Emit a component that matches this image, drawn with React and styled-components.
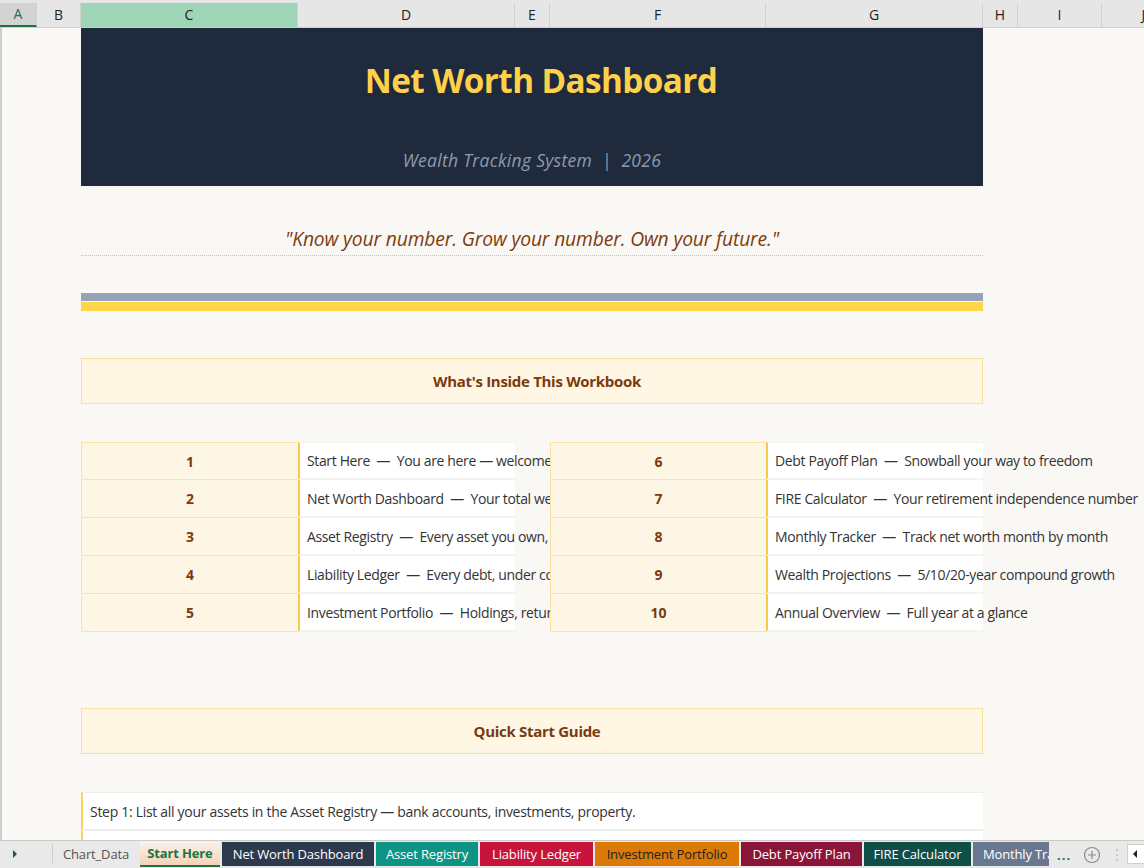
import React from "react";
import styled, { createGlobalStyle } from "styled-components";

const Global = createGlobalStyle`
  html, body { margin: 0; padding: 0; background: #faf8f4; }
  body { width: 1144px; height: 868px; overflow: hidden; font-family: "Open Sans", "Lato", sans-serif; }
  * { box-sizing: border-box; }
`;

const Frame = styled.div`
  width: 1144px;
  height: 868px;
  display: flex;
  flex-direction: column;
  overflow: hidden;
`;

const ColBar = styled.div`
  display: flex;
  height: 28px;
  background: #e6e6e6;
  border-bottom: 1px solid #cfcfcf;
  flex-shrink: 0;
  overflow: hidden;
`;

const ColCell = styled.div`
  width: ${(p) => p.w}px;
  flex-shrink: 0;
  display: flex;
  align-items: center;
  justify-content: center;
  font-family: "Open Sans", sans-serif;
  font-size: 14px;
  color: ${(p) => (p.active ? "#217346" : "#222")};
  background: ${(p) => (p.active ? "#d3d3d3" : p.sel ? "#9fd5b7" : "transparent")};
  border-right: 1px solid #d2d2d2;
  border-bottom: ${(p) => (p.active ? "2px solid #217346" : "0")};
  margin-top: 3px;
  padding-bottom: 2px;
`;

const Sheet = styled.div`
  flex: 1;
  overflow: hidden;
  background: #faf8f4;
  border-left: 2px solid #cfcfcf;
  padding-left: 79px;
  display: flex;
  flex-direction: column;
`;

const Inner = styled.div`
  width: 902px;
  display: flex;
  flex-direction: column;
`;

const Banner = styled.div`
  height: 158px;
  background: #1f2a3c;
  display: flex;
  flex-direction: column;
  align-items: center;
`;

const Title = styled.div`
  margin-top: 31px;
  padding-left: 18px;
  font-family: "Open Sans", sans-serif;
  font-weight: 700;
  font-size: 33.3px;
  letter-spacing: -0.6px;
  color: #ffd04a;
  line-height: 42px;
`;

const Subtitle = styled.div`
  margin-top: 47px;
  font-family: "Open Sans", sans-serif;
  font-style: italic;
  font-size: 17.5px;
  color: #8e9ab0;
  white-space: pre;
  line-height: 24px;
  letter-spacing: 0.3px;
`;

const Quote = styled.div`
  height: 70px;
  display: flex;
  align-items: flex-end;
  justify-content: center;
  padding-bottom: 3px;
  border-bottom: 1px dotted #f5c73a;
  font-family: "Open Sans", sans-serif;
  font-style: italic;
  font-size: 19.3px;
  color: #7f3b10;
  letter-spacing: -0.15px;
`;

const Stripe = styled.div`
  height: ${(p) => p.h}px;
  background: ${(p) => p.c};
  margin-top: ${(p) => p.mt || 0}px;
`;

const SectionBox = styled.div`
  margin-top: ${(p) => p.mt}px;
  height: 46px;
  background: #fff6e3;
  border: 1px solid #f9e09a;
  display: flex;
  align-items: center;
  justify-content: center;
  padding-left: 10px;
  font-family: "Open Sans", sans-serif;
  font-weight: 700;
  font-size: 15px;
  letter-spacing: -0.3px;
  color: #7a3a10;
`;

const Contents = styled.div`
  margin-top: 38px;
  display: grid;
  grid-template-columns: 217px 217px 35px 216px 217px;
  grid-auto-rows: 38px;
`;

const NumCell = styled.div`
  background: #fef6e4;
  border: 1px solid #fbe3a0;
  border-top-width: ${(p) => (p.first ? 1 : 0)}px;
  border-right: 0;
  display: flex;
  align-items: center;
  justify-content: center;
  font-family: "Open Sans", sans-serif;
  font-weight: 700;
  font-size: 14px;
  color: #7a3a10;
  position: relative;
  z-index: 1;
`;

const DescCell = styled.div`
  background: #ffffff;
  border-left: 2px solid #f8c94a;
  border-bottom: 2px solid #f3f3f3;
  border-top: ${(p) => (p.first ? "1px solid #f3f3f3" : "0")};
  display: flex;
  align-items: center;
  padding-left: 7px;
  white-space: pre;
  overflow: visible;
  font-family: "Open Sans", sans-serif;
  font-size: 14px;
  letter-spacing: -0.36px;
  color: #333;
  position: relative;
  z-index: 0;
`;

const Gap = styled.div``;

const StepRow = styled.div`
  margin-top: ${(p) => p.mt || 0}px;
  height: 38px;
  flex-shrink: 0;
  background: #fff;
  border-left: 2px solid #f8d35a;
  border-top: 1px solid #eeeeee;
  border-bottom: 1px solid #eeeeee;
  display: flex;
  align-items: center;
  padding-left: 7px;
  font-family: "Open Sans", sans-serif;
  font-size: 14px;
  letter-spacing: -0.3px;
  color: #333;
  white-space: nowrap;
`;

const TabBar = styled.div`
  height: 28px;
  flex-shrink: 0;
  background: #e9e9e9;
  border-top: 1px solid #cacaca;
  display: flex;
  align-items: stretch;
  font-family: "Open Sans", sans-serif;
  font-size: 13px;
  letter-spacing: -0.15px;
  overflow: hidden;
`;

const Nav = styled.div`
  width: 53px;
  flex-shrink: 0;
  display: flex;
  align-items: center;
  padding-left: 12px;
  border-right: 1px solid #cdcdcd;
  margin: 3px 0 5px;
`;

const Tab = styled.div`
  display: flex;
  align-items: center;
  justify-content: center;
  margin: 1px 1px 2px 1px;
  background: ${(p) => p.bg};
  color: ${(p) => p.fg};
  font-weight: ${(p) => (p.active ? 700 : 400)};
  white-space: nowrap;
  overflow: hidden;
  flex-shrink: 0;
  width: ${(p) => p.w}px;
  ${(p) => p.clip && `justify-content: flex-start; padding-left: 10px;`}
  ${(p) =>
    p.active &&
    `background: linear-gradient(#fbf3ec, #f3d3b6);
     border-bottom: 2px solid #217346;
     margin: 0 1px 1px 1px;`}
`;

const TabDots = styled.div`
  display: flex;
  align-items: center;
  flex-shrink: 0;
  margin-left: 7px;
  color: #217346;
  font-weight: 700;
  letter-spacing: 1px;
`;

const IconSlot = styled.div`
  display: flex;
  align-items: center;
  flex-shrink: 0;
  margin-left: ${(p) => p.ml}px;
`;

const ScrollBox = styled.div`
  margin-left: 8px;
  width: 20px;
  flex-shrink: 0;
  background: #fff;
  border: 1px solid #cfcfcf;
  margin-top: 3px;
  margin-bottom: 4px;
  display: flex;
  align-items: center;
  padding-left: 4px;
`;

const left = [
  ["1", "Start Here", "You are here — welcome"],
  ["2", "Net Worth Dashboard", "Your total wealth at a glance"],
  ["3", "Asset Registry", "Every asset you own, valued"],
  ["4", "Liability Ledger", "Every debt, under control"],
  ["5", "Investment Portfolio", "Holdings, returns and allocation"],
];
const right = [
  ["6", "Debt Payoff Plan", "Snowball your way to freedom"],
  ["7", "FIRE Calculator", "Your retirement independence number"],
  ["8", "Monthly Tracker", "Track net worth month by month"],
  ["9", "Wealth Projections", "5/10/20-year compound growth"],
  ["10", "Annual Overview", "Full year at a glance"],
];

const cols = [
  ["A", 37], ["B", 44], ["C", 217], ["D", 217], ["E", 35], ["F", 216],
  ["G", 217], ["H", 35], ["I", 84], ["J", 84],
];

const tabs = [
  { t: "Net Worth Dashboard", bg: "#2d3a4e", fg: "#fff", w: 152 },
  { t: "Asset Registry", bg: "#0e9484", fg: "#fff", w: 102 },
  { t: "Liability Ledger", bg: "#c8143c", fg: "#fff", w: 113 },
  { t: "Investment Portfolio", bg: "#dc7a08", fg: "#222", w: 144 },
  { t: "Debt Payoff Plan", bg: "#8a1538", fg: "#fff", w: 121 },
  { t: "FIRE Calculator", bg: "#0f4f47", fg: "#fff", w: 107 },
  { t: "Monthly Tracker", bg: "#6a7791", fg: "#fff", w: 76, clip: true },
];

export default function App() {
  return (
    <Frame>
      <Global />
      <ColBar>
        {cols.map(([l, w]) => (
          <ColCell key={l} w={w} active={l === "A"} sel={l === "C"}>
            {l}
          </ColCell>
        ))}
      </ColBar>
      <Sheet>
        <Inner>
          <Banner>
            <Title>Net Worth Dashboard</Title>
            <Subtitle>Wealth Tracking System  |  2026</Subtitle>
          </Banner>
          <Quote>"Know your number. Grow your number. Own your future."</Quote>
          <Stripe h={8} c="#96a3b8" mt={37} />
          <Stripe h={9} c="#ffd54a" mt={1} />
          <SectionBox mt={47}>What's Inside This Workbook</SectionBox>
          <Contents>
            {left.map((l, i) => {
              const r = right[i];
              return (
                <React.Fragment key={l[0]}>
                  <NumCell first={i === 0}>{l[0]}</NumCell>
                  <DescCell first={i === 0}>{`${l[1]}  —  ${l[2]}`}</DescCell>
                  <Gap />
                  <NumCell first={i === 0}>{r[0]}</NumCell>
                  <DescCell first={i === 0}>{`${r[1]}  —  ${r[2]}`}</DescCell>
                </React.Fragment>
              );
            })}
          </Contents>
          <SectionBox mt={76}>Quick Start Guide</SectionBox>
          <StepRow mt={38}>
            Step 1: List all your assets in the Asset Registry — bank accounts, investments, property.
          </StepRow>
          <StepRow />
        </Inner>
      </Sheet>
      <TabBar>
        <Nav>
          <svg width="6" height="8" viewBox="0 0 6 8">
            <path d="M1 0 L5 4 L1 8 Z" fill="#1e5c3a" />
          </svg>
        </Nav>
        <Tab bg="transparent" fg="#555" w={84}>Chart_Data</Tab>
        <Tab active bg="#fff" fg="#217346" w={80}>Start Here</Tab>
        {tabs.map((t) => (
          <Tab key={t.t} bg={t.bg} fg={t.fg} w={t.w} clip={t.clip}>
            {t.t}
          </Tab>
        ))}
        <TabDots>...</TabDots>
        <IconSlot ml={12}>
          <svg width="18" height="18" viewBox="0 0 18 18">
            <circle cx="9" cy="9" r="7.5" fill="none" stroke="#8a8a8a" strokeWidth="1.2" />
            <path d="M9 5 V13 M5 9 H13" stroke="#8a8a8a" strokeWidth="1.2" />
          </svg>
        </IconSlot>
        <IconSlot ml={14}>
          <svg width="4" height="14" viewBox="0 0 4 14">
            <circle cx="2" cy="2" r="1" fill="#bdbdbd" />
            <circle cx="2" cy="7" r="1" fill="#bdbdbd" />
            <circle cx="2" cy="12" r="1" fill="#bdbdbd" />
          </svg>
        </IconSlot>
        <ScrollBox>
          <svg width="6" height="8" viewBox="0 0 6 8">
            <path d="M5 0 L1 4 L5 8 Z" fill="#222" />
          </svg>
        </ScrollBox>
      </TabBar>
    </Frame>
  );
}
